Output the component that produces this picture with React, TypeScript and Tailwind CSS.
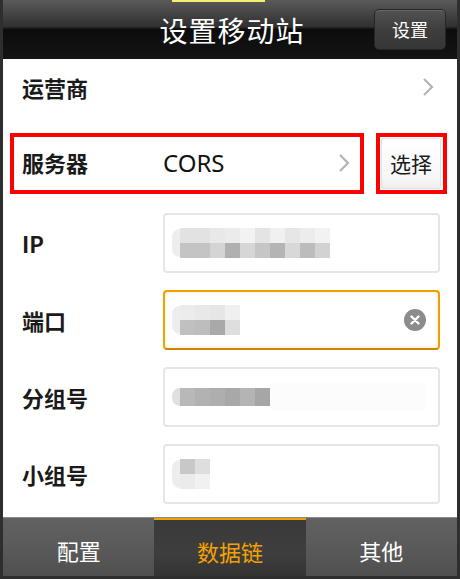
import React from "react";

const cjk = "font-['Noto_Sans_CJK_SC','Noto_Sans',sans-serif]";

function Chevron({ className = "" }: { className?: string }) {
  return (
    <svg width="12" height="20" viewBox="0 0 12 20" className={className}>
      <polyline points="2,2 10,10 2,18" fill="none" stroke="#b4b4b4" strokeWidth="2.2" />
    </svg>
  );
}

// pixelated (mosaic) value, rows of block colours
function Mosaic({ rows }: { rows: string[][] }) {
  return (
    <div className="relative flex items-center">
      <div className="w-[8px] h-[28px] rounded-l-full bg-[#ededed]" />
      <div className="flex flex-col">
        {rows.map((row, i) => (
          <div key={i} className="flex">
            {row.map((c, j) => (
              <div key={j} className={`w-[15px] h-[15px] ${c}`} />
            ))}
          </div>
        ))}
      </div>
    </div>
  );
}

function InputRow({
  label,
  focused,
  children,
}: {
  label: string;
  focused?: boolean;
  children?: React.ReactNode;
}) {
  return (
    <div className="flex items-center h-[60px] pl-[19px] pr-[17px]">
      <div className={`w-[141px] text-[22px] font-bold text-[#1a1a1a] ${cjk}`}>{label}</div>
      <div
        className={`flex-1 h-full rounded-[4px] flex items-center pl-[7px] pr-[12px] ${
          focused
            ? "border-2 border-[#f0a000] border-b-[#d08400] shadow-[inset_0_0_4px_rgba(240,160,0,0.25)]"
            : "border-2 border-[#e6e6e6]"
        }`}
      >
        <div className="flex-1">{children}</div>
        {focused && (
          <div className="w-[22px] h-[22px] rounded-full bg-[#8c8c8c] flex items-center justify-center">
            <svg width="10" height="10" viewBox="0 0 10 10">
              <path d="M1.5 1.5 L8.5 8.5 M8.5 1.5 L1.5 8.5" stroke="#fff" strokeWidth="2.4" strokeLinecap="round" />
            </svg>
          </div>
        )}
      </div>
    </div>
  );
}

export default function App() {
  const tabs = [
    { name: "配置", active: false },
    { name: "数据链", active: true },
    { name: "其他", active: false },
  ];

  return (
    <div className={`relative w-[460px] h-[579px] bg-white border-x-[3px] border-b-[3px] border-[#2e2e2e] flex flex-col overflow-hidden ${cjk}`}>
      {/* top yellow marker */}
      <div className="absolute left-[169px] top-0 w-[93px] h-[2px] bg-[#f4f06a] z-10" />

      {/* HEADER */}
      <div className="relative h-[59px] shrink-0 flex items-center justify-center bg-[linear-gradient(#5a5a5a_0%,#303030_45%,#0c0c0c_50%,#141414_100%)]">
        <span className="text-[28px] text-white leading-none tracking-[1px] ml-[4px]">设置移动站</span>
        <button className="absolute right-[11px] top-[9px] w-[72px] h-[41px] rounded-[5px] border border-[#262626] bg-[linear-gradient(#525252,#3e3e3e_50%,#363636)] shadow-[inset_0_1px_0_rgba(255,255,255,0.12)] text-white text-[18px]">
          设置
        </button>
      </div>

      {/* CONTENT */}
      <div className="flex-1 flex flex-col">
        <div className="h-[56px] flex items-center justify-between pl-[19px] pr-[23px]">
          <span className="text-[22px] font-bold text-[#1a1a1a]">运营商</span>
          <Chevron />
        </div>

        <div className="mt-[18px] h-[61px] flex ml-[7px] mr-[10px] gap-[12px]">
          <div className="flex-1 border-4 border-[#ff0000] flex items-center pl-[8px] pr-[10px] pb-[2px]">
            <span className="w-[141px] text-[22px] font-bold text-[#1a1a1a]">服务器</span>
            <span className="flex-1 text-[24px] text-[#111] font-['Noto_Sans',sans-serif]">CORS</span>
            <Chevron />
          </div>
          <div className="w-[71px] border-4 border-[#ff0000] p-[1px] pr-[2px]">
            <button className="w-full h-full border border-[#e2e2e2] rounded-[2px] bg-[linear-gradient(#fff,#f7f7f7_80%,#eee)] text-[21px] text-[#1a1a1a]">
              选择
            </button>
          </div>
        </div>

        <div className="mt-[19px] flex flex-col gap-[17px]">
          <InputRow label="IP">
            <Mosaic
              rows={[
                ["bg-[#e2e2e2]", "bg-[#e2e2e2]", "bg-[#e8e8e8]", "bg-[#ebebeb]", "bg-[#f2f2f2]", "bg-[#e4e4e4]", "bg-[#f0f0f0]", "bg-[#e6e6e6]", "bg-[#ececec]", "bg-[#f2f2f2]"],
                ["bg-[#c4c4c4]", "bg-[#c4c4c4]", "bg-[#d4d4d4]", "bg-[#b0b0b0]", "bg-[#d6d6d6]", "bg-[#c6c6c6]", "bg-[#b4b4b4]", "bg-[#d8d8d8]", "bg-[#bcbcbc]", "bg-[#d2d2d2]"],
              ]}
            />
          </InputRow>
          <InputRow label="端口" focused>
            <Mosaic
              rows={[
                ["bg-[#ececec]", "bg-[#e8e8e8]", "bg-[#e6e6e6]", "bg-[#f0f0f0]"],
                ["bg-[#c0c0c0]", "bg-[#bdbdbd]", "bg-[#a9a9a9]", "bg-[#dedede]"],
              ]}
            />
          </InputRow>
          <InputRow label="分组号">
            <div className="flex items-center">
              <div className="w-[8px] h-[18px] rounded-l-full bg-[#e0e0e0]" />
              {["bg-[#b8b8b8]", "bg-[#b2b2b2]", "bg-[#aeaeae]", "bg-[#a8a8a8]", "bg-[#b4b4b4]", "bg-[#a6a6a6]"].map((c, i) => (
                <div key={i} className={`w-[15px] h-[18px] ${c}`} />
              ))}
              <div className="flex-1 h-[28px] bg-[#fcfcfc]" />
            </div>
          </InputRow>
          <InputRow label="小组号">
            <Mosaic
              rows={[
                ["bg-[#c8c8c8]", "bg-[#dedede]"],
                ["bg-[#ebebeb]", "bg-[#f1f1f1]"],
              ]}
            />
          </InputRow>
        </div>
      </div>

      {/* TAB BAR */}
      <div className="h-[59px] shrink-0 flex border-t border-[#8a8a8a]">
        {tabs.map((t) =>
          t.active ? (
            <div
              key={t.name}
              className="flex-1 flex items-center justify-center pt-[6px] border-t-2 border-[#f0a000] bg-[linear-gradient(#3a3a3a,#3e3e3e_60%,#333)] text-[22px] text-[#f5a200]"
            >
              {t.name}
            </div>
          ) : (
            <div
              key={t.name}
              className="flex-1 flex items-center justify-center pt-[6px] bg-[linear-gradient(#616161,#5a5a5a_50%,#4f4f4f)] text-[22px] text-white"
            >
              {t.name}
            </div>
          )
        )}
      </div>
    </div>
  );
}
